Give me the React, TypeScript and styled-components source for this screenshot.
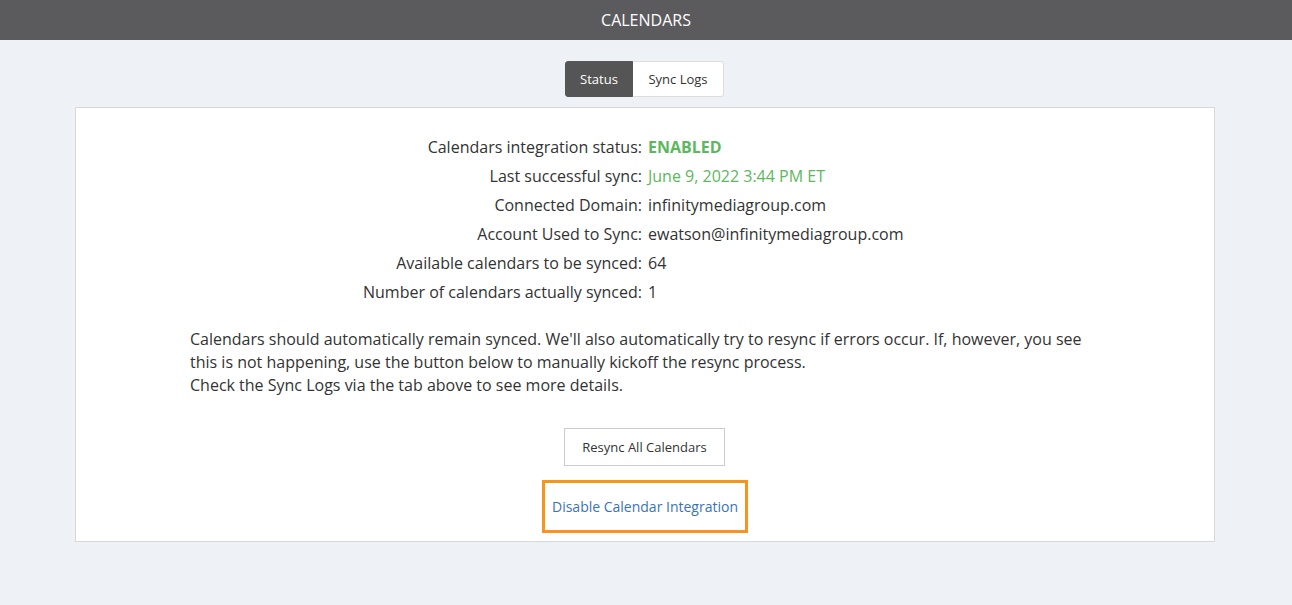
import React from "react";
import styled, { createGlobalStyle } from "styled-components";

const Global = createGlobalStyle`
  html, body { margin: 0; padding: 0; }
  body {
    background: #eef1f5;
    font-family: "Open Sans", "Liberation Sans", sans-serif;
    color: #333;
  }
`;

const Page = styled.div`
  min-height: 605px;
  background: #eef1f5;
`;

const Header = styled.header`
  height: 40px;
  background: #5b5b5d;
  color: #fff;
  display: flex;
  align-items: center;
  justify-content: center;
  font-size: 16px;
`;

const Tabs = styled.div`
  display: flex;
  justify-content: center;
  margin-top: 21px;
  padding-right: 3px;
`;

const Tab = styled.button<{ $active?: boolean; $w: number }>`
  font-family: inherit;
  font-size: 13px;
  height: 36px;
  width: ${(p) => p.$w}px;
  padding: 0;
  border: 1px solid ${(p) => (p.$active ? "#555" : "#ddd")};
  background: ${(p) => (p.$active ? "#555555" : "#fff")};
  color: ${(p) => (p.$active ? "#fff" : "#333")};
  cursor: pointer;
  &:first-child { border-radius: 3px 0 0 3px; }
  &:last-child { border-radius: 0 3px 3px 0; border-left: none; }
`;

const Panel = styled.section`
  margin: 10px 77px 0 75px;
  background: #fff;
  border: 1px solid #d8d8d8;
  padding: 25px 0 8px;
  display: flex;
  flex-direction: column;
  align-items: center;
`;

const InfoGrid = styled.div`
  display: grid;
  grid-template-columns: 566px 1fr;
  column-gap: 6px;
  width: 100%;
  font-size: 16px;
  line-height: 29px;
`;

const Label = styled.div`
  text-align: right;
`;

const Value = styled.div<{ $green?: boolean; $bold?: boolean }>`
  color: ${(p) => (p.$green ? "#5cb85c" : "#333")};
  font-weight: ${(p) => (p.$bold ? 700 : 400)};
`;

const Note = styled.p`
  width: 910px;
  margin: 21px 0 0;
  font-size: 16px;
  line-height: 23px;
`;

const ResyncButton = styled.button`
  margin-top: 31px;
  font-family: inherit;
  font-size: 13px;
  color: #333;
  background: #fff;
  border: 1px solid #ccc;
  height: 38px;
  width: 161px;
  padding: 0;
  margin-left: -1px;
  cursor: pointer;
`;

const DisableBox = styled.div`
  margin-top: 14px;
  border: 3px solid #f7941d;
  padding: 0 7px;
  height: 47px;
  display: flex;
  align-items: center;
`;

const DisableLink = styled.a`
  color: #3b73b9;
  font-size: 14px;
  text-decoration: none;
  cursor: pointer;
`;

const rows: { label: string; value: string; green?: boolean; bold?: boolean }[] = [
  { label: "Calendars integration status:", value: "ENABLED", green: true, bold: true },
  { label: "Last successful sync:", value: "June 9, 2022 3:44 PM ET", green: true },
  { label: "Connected Domain:", value: "infinitymediagroup.com" },
  { label: "Account Used to Sync:", value: "ewatson@infinitymediagroup.com" },
  { label: "Available calendars to be synced:", value: "64" },
  { label: "Number of calendars actually synced:", value: "1" },
];

export default function App() {
  return (
    <Page>
      <Global />
      <Header>CALENDARS</Header>
      <Tabs>
        <Tab $active $w={68}>Status</Tab>
        <Tab $w={91}>Sync Logs</Tab>
      </Tabs>
      <Panel>
        <InfoGrid>
          {rows.map((r) => (
            <React.Fragment key={r.label}>
              <Label>{r.label}</Label>
              <Value $green={r.green} $bold={r.bold}>{r.value}</Value>
            </React.Fragment>
          ))}
        </InfoGrid>
        <Note>
          Calendars should automatically remain synced. We'll also automatically try to resync if errors occur. If, however, you see this is not happening, use the button below to manually kickoff the resync process.
          <br />
          Check the Sync Logs via the tab above to see more details.
        </Note>
        <ResyncButton>Resync All Calendars</ResyncButton>
        <DisableBox>
          <DisableLink>Disable Calendar Integration</DisableLink>
        </DisableBox>
      </Panel>
    </Page>
  );
}
